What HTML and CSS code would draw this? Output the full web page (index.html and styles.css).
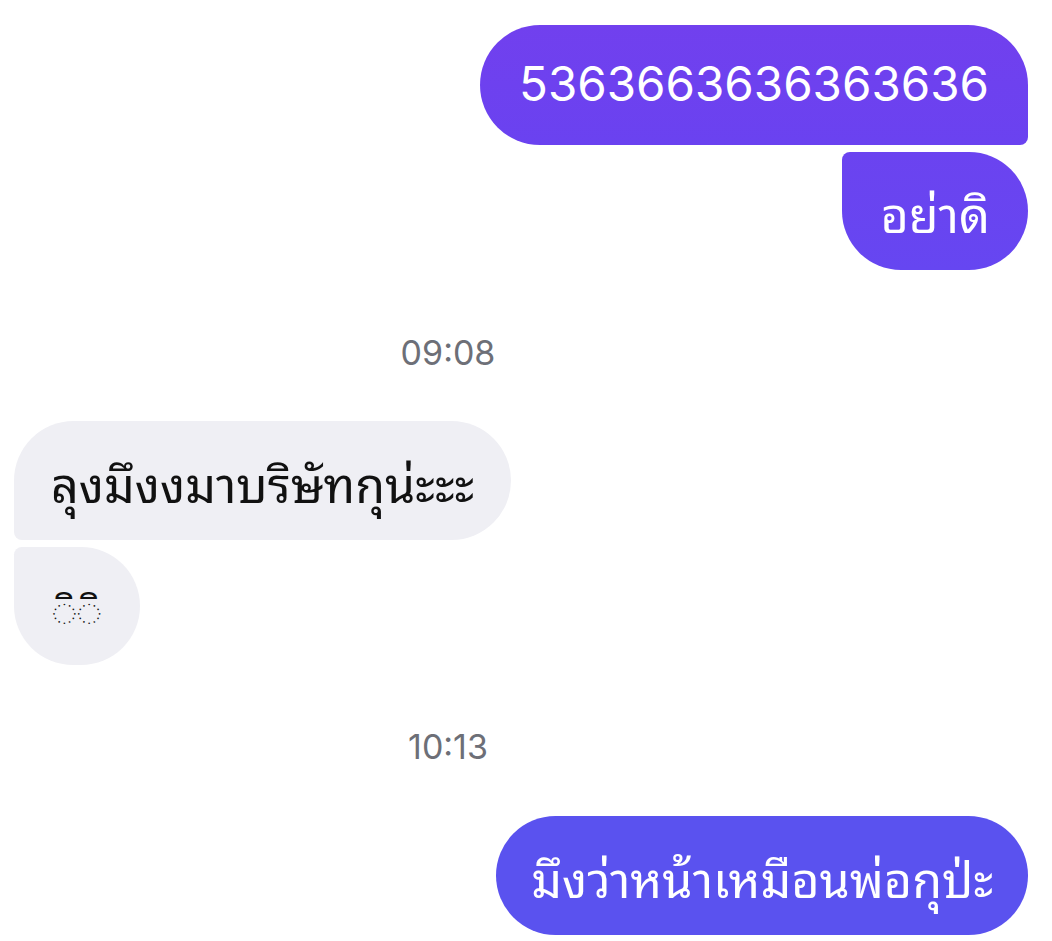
FILE: index.html
```html
<!DOCTYPE html>
<html lang="th">
<head>
<meta charset="utf-8">
<link rel="stylesheet" href="styles.css">
</head>
<body>
<div class="chat">
  <div class="row out">
    <div class="bubble sent first digits">5363663636363636</div>
  </div>
  <div class="row out gap">
    <div class="bubble sent second">อย่าดิ</div>
  </div>
  <div class="stamp s1">09:08</div>
  <div class="row in">
    <div class="bubble recv rfirst">ลุงมึงงมาบริษัทกุน่ะะะ</div>
  </div>
  <div class="row in gap">
    <div class="bubble recv rsecond small">◌ิ◌ิ</div>
  </div>
  <div class="stamp s2">10:13</div>
  <div class="row out">
    <div class="bubble sent2 single">มึงว่าหน้าเหมือนพ่อกุป่ะ</div>
  </div>
</div>
</body>
</html>
```

FILE: styles.css
```css
html, body {
  margin: 0;
  padding: 0;
  background: #ffffff;
}
.chat {
  width: 1052px;
  height: 941px;
  overflow: hidden;
  padding-top: 25px;
  box-sizing: border-box;
  display: flex;
  flex-direction: column;
  font-family: Inter, "Noto Sans Thai Looped", "Thonburi", "Loma", "Garuda", "Waree", "Norasi", "Kinnari", "Sarabun", "Noto Sans Thai", "Noto Sans", "DejaVu Sans", sans-serif;
}
.row {
  display: flex;
}
.row.out {
  justify-content: flex-end;
  padding-right: 24px;
}
.row.in {
  justify-content: flex-start;
  padding-left: 14px;
}
.row.gap {
  margin-top: 7px;
}
.bubble {
  height: 119px;
  display: flex;
  align-items: center;
  font-size: 48.5px;
  padding: 0 37px;
  box-sizing: border-box;
  white-space: nowrap;
}
.digits {
  font-size: 47.5px;
  padding: 0 39px 4px 39px;
}
.sent {
  color: #ffffff;
  background: linear-gradient(180deg, #7140ee 0%, #6a42f0 100%);
}
.first {
  height: 120px;
  border-radius: 60px 60px 8px 60px;
}
.second {
  height: 118px;
  padding: 0 38px;
  border-radius: 8px 60px 60px 60px;
  background: linear-gradient(180deg, #6b43f0 0%, #6646f1 100%);
}
.recv {
  color: #111111;
  background: #efeff4;
}
.rfirst {
  border-radius: 60px 60px 60px 8px;
}
.rsecond {
  height: 118px;
  border-radius: 8px 60px 60px 60px;
}
.small {
  font-size: 38px;
  padding: 0 38px;
}
.sent2 {
  color: #ffffff;
  background: #5a52ef;
}
.single {
  border-radius: 60px;
  padding: 0 35px;
}
.stamp {
  text-align: center;
  padding-right: 156px;
  font-size: 34px;
  line-height: 40px;
  color: #6d6f77;
}
.s1 {
  margin-top: 63px;
  margin-bottom: 48px;
}
.s2 {
  margin-top: 62px;
  margin-bottom: 49px;
}
```
